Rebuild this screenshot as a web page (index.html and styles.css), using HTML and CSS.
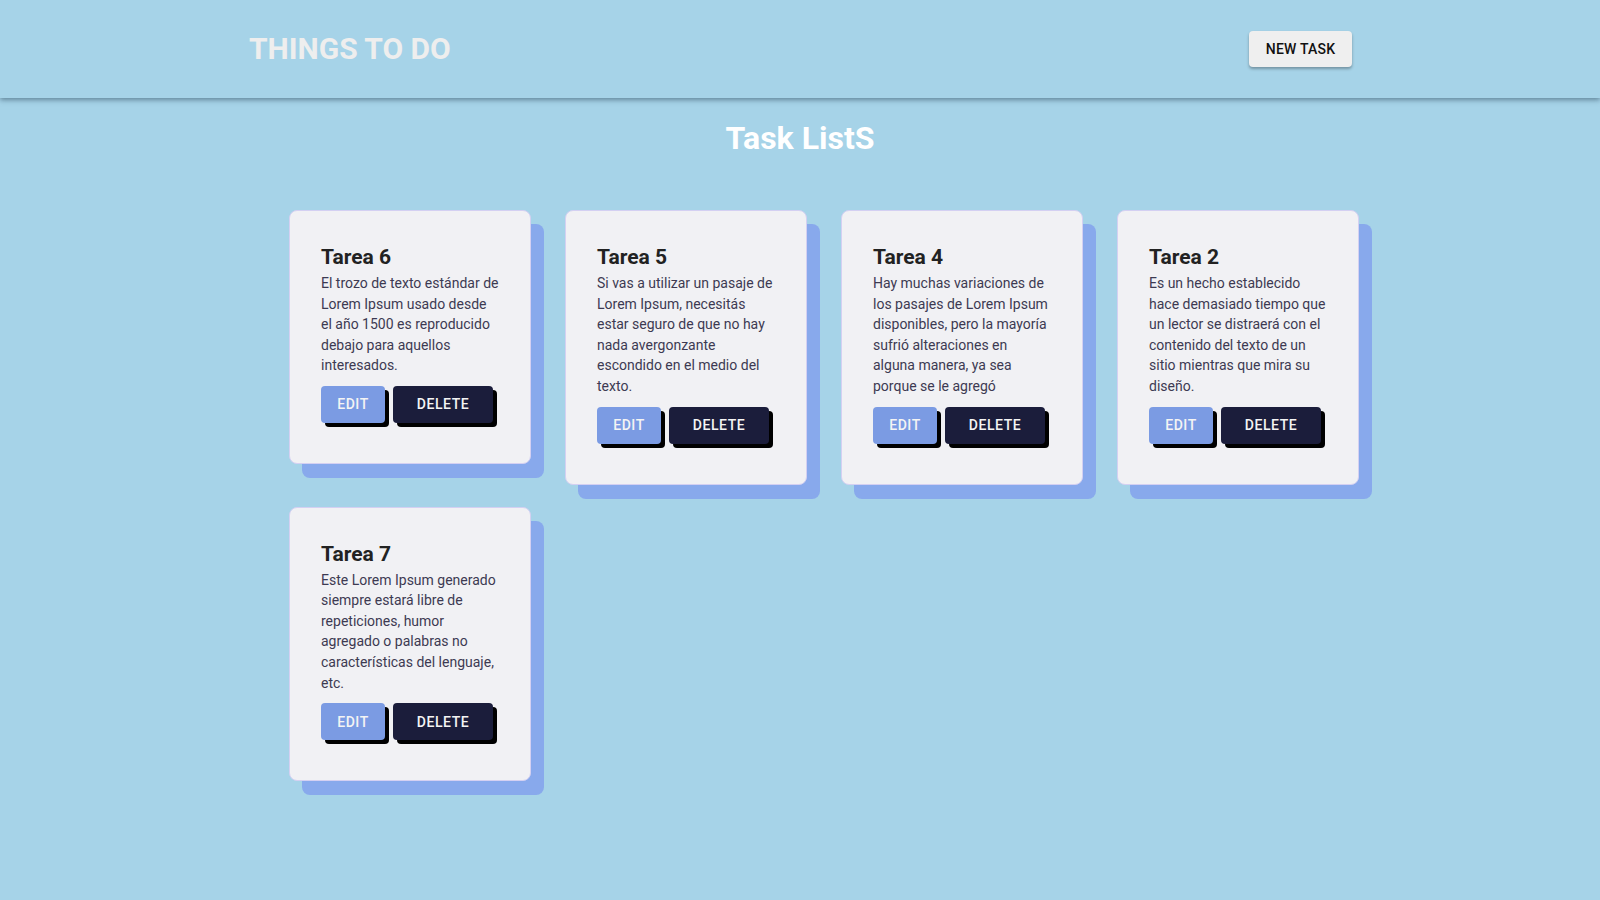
FILE: index.html
```html
<!DOCTYPE html>
<html lang="es">
<head>
<meta charset="utf-8">
<title>Things to do</title>
<link rel="stylesheet" href="styles.css">
</head>
<body>
<header class="topbar">
  <div class="topbar-inner">
    <h1 class="brand">THINGS TO DO</h1>
    <button class="new-task">NEW TASK</button>
  </div>
</header>
<main class="content">
  <h2 class="page-title">Task ListS</h2>
  <div class="grid-wrap">
    <div class="grid">
      <article class="card">
        <h3 class="card-title">Tarea 6</h3>
        <p class="card-text">El trozo de texto estándar de Lorem Ipsum usado desde el año 1500 es reproducido debajo para aquellos interesados.</p>
        <div class="actions"><button class="btn btn-edit">EDIT</button><button class="btn btn-delete">DELETE</button></div>
      </article>
      <article class="card">
        <h3 class="card-title">Tarea 5</h3>
        <p class="card-text">Si vas a utilizar un pasaje de Lorem Ipsum, necesitás estar seguro de que no hay nada avergonzante escondido en el medio del texto.</p>
        <div class="actions"><button class="btn btn-edit">EDIT</button><button class="btn btn-delete">DELETE</button></div>
      </article>
      <article class="card">
        <h3 class="card-title">Tarea 4</h3>
        <p class="card-text">Hay muchas variaciones de los pasajes de Lorem Ipsum disponibles, pero la mayoría sufrió alteraciones en alguna manera, ya sea porque se le agregó</p>
        <div class="actions"><button class="btn btn-edit">EDIT</button><button class="btn btn-delete">DELETE</button></div>
      </article>
      <article class="card">
        <h3 class="card-title">Tarea 2</h3>
        <p class="card-text">Es un hecho establecido hace demasiado tiempo que un lector se distraerá con el contenido del texto de un sitio mientras que mira su diseño.</p>
        <div class="actions"><button class="btn btn-edit">EDIT</button><button class="btn btn-delete">DELETE</button></div>
      </article>
      <article class="card">
        <h3 class="card-title">Tarea 7</h3>
        <p class="card-text">Este Lorem Ipsum generado siempre estará libre de repeticiones, humor agregado o palabras no características del lenguaje, etc.</p>
        <div class="actions"><button class="btn btn-edit">EDIT</button><button class="btn btn-delete">DELETE</button></div>
      </article>
    </div>
  </div>
</main>
</body>
</html>
```

FILE: styles.css
```css
* { box-sizing: border-box; }
html, body {
  margin: 0;
  padding: 0;
  background: #a6d3e8;
  font-family: Roboto, "Liberation Sans", Arial, sans-serif;
}
body { min-height: 900px; }

.topbar {
  height: 98px;
  background: #a6d3e8;
  box-shadow: 0 2px 5px rgba(40, 70, 90, 0.55);
  position: relative;
}
.topbar-inner {
  width: 1103px;
  margin-left: 249px;
  height: 98px;
  display: flex;
  align-items: center;
  justify-content: space-between;
}
.brand {
  margin: 0 0 2px;
  font-size: 30px;
  font-weight: 700;
  color: #eeeeee;
  letter-spacing: 0;
}
.new-task {
  width: 103px;
  height: 36px;
  border: none;
  border-radius: 4px;
  background: #efefef;
  color: #111;
  font-family: Roboto, "Liberation Sans", sans-serif;
  font-weight: 500;
  font-size: 14px;
  letter-spacing: 0.2px;
  box-shadow: 0 2px 3px rgba(0, 0, 0, 0.3);
  padding: 0;
  margin-bottom: 1px;
}

.content { padding-top: 18px; }
.page-title {
  margin: 0;
  text-align: center;
  font-size: 32px;
  font-weight: 700;
  color: #ffffff;
  line-height: 44px;
}

.grid-wrap {
  width: 1118px;
  margin: 50px auto 0;
  padding-left: 48px;
}
.grid {
  display: grid;
  grid-template-columns: repeat(4, 242px);
  column-gap: 34px;
  row-gap: 22px;
  align-items: start;
}
.card {
  background: #f1f1f4;
  border: 1px solid #d4d0f2;
  border-radius: 8px;
  box-shadow: 13px 14px 0 #88a9ec;
  padding: 33px 31px 40px 31px;
}
.card-title {
  margin: 0;
  font-size: 21px;
  font-weight: 700;
  color: #222;
  line-height: 26px;
}
.card-text {
  margin: 3px 0 10px;
  font-size: 14px;
  line-height: 20.6px;
  color: #3d3a52;
}
.actions { display: flex; gap: 8px; }
.btn {
  height: 37px;
  border: none;
  border-radius: 4px;
  font-family: Roboto, "Liberation Sans", sans-serif;
  font-weight: 500;
  font-size: 14px;
  letter-spacing: 0.6px;
  color: #f4f4f4;
  box-shadow: 4px 4px 0 #000;
  padding: 0;
}
.btn-edit { width: 64px; background: #7b9be3; }
.btn-delete { width: 100px; background: #1b1d3b; }
```
